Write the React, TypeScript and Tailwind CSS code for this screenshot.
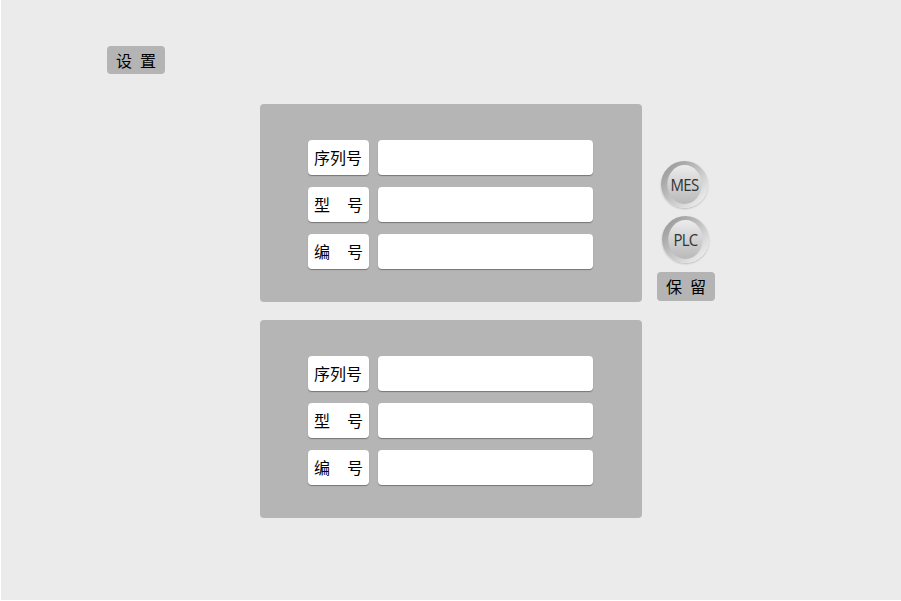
const cjk = "font-['Noto_Sans_CJK_SC',sans-serif]";

function Field({ label }: { label: string[] }) {
  return (
    <div className="flex h-[35px] gap-[9px]">
      <div
        className={`flex w-[61px] items-center rounded-[4px] bg-white px-[6px] pb-[2px] text-[16px] text-black shadow-[0_1px_1px_rgba(0,0,0,0.35)] ${
          label.length === 1 ? "justify-start" : "justify-between"
        }`}
      >
        {label.map((c, i) => (
          <span key={i}>{c}</span>
        ))}
      </div>
      <div className="w-[215px] rounded-[4px] bg-white shadow-[0_1px_1px_rgba(0,0,0,0.35)]" />
    </div>
  );
}

function Panel() {
  return (
    <div className={`flex h-[198px] w-[382px] flex-col gap-[12px] rounded-[4px] bg-[#b5b5b5] pl-[48px] pt-[36px] ${cjk}`}>
      <Field label={["序列号"]} />
      <Field label={["型", "号"]} />
      <Field label={["编", "号"]} />
    </div>
  );
}

function RoundButton({ text }: { text: string }) {
  return (
    <div className="h-[47px] w-[47px] rounded-full bg-linear-to-br from-[#8f8f8f] via-[#c4c4c4] to-[#fafafa] p-[4px] shadow-[0_1px_2px_rgba(0,0,0,0.2)]">
      <div className="flex h-full w-full items-center justify-center rounded-full bg-linear-to-b from-[#ececec] to-[#b9b9b9] font-['Open_Sans',sans-serif] text-[17px] tracking-[-0.8px] text-[#333] [transform:scaleX(0.88)]">
        {text}
      </div>
    </div>
  );
}

export default function App() {
  return (
    <div className="h-[601px] w-[901px] border-b border-l border-white bg-[#ebebeb]">
      <div className="pl-[106px] pt-[46px]">
        <button className={`h-[28px] w-[58px] rounded-[4px] bg-[#b4b4b4] pb-[1px] pl-[8px] text-[16px] tracking-[8px] text-black ${cjk}`}>
          设置
        </button>
      </div>
      <div className="mt-[30px] flex pl-[259px]">
        <div className="flex flex-col gap-[18px]">
          <Panel />
          <Panel />
        </div>
        <div className="ml-[15px] flex w-[58px] flex-col items-center pt-[57px]">
          <div className="mr-[4px]">
            <RoundButton text="MES" />
          </div>
          <div className="mt-[8px] mr-[2px]">
            <RoundButton text="PLC" />
          </div>
          <button className={`mt-[9px] h-[29px] w-[58px] rounded-[4px] bg-[#b4b4b4] pb-[1px] pl-[8px] text-[16px] tracking-[8px] text-black ${cjk}`}>
            保留
          </button>
        </div>
      </div>
    </div>
  );
}
